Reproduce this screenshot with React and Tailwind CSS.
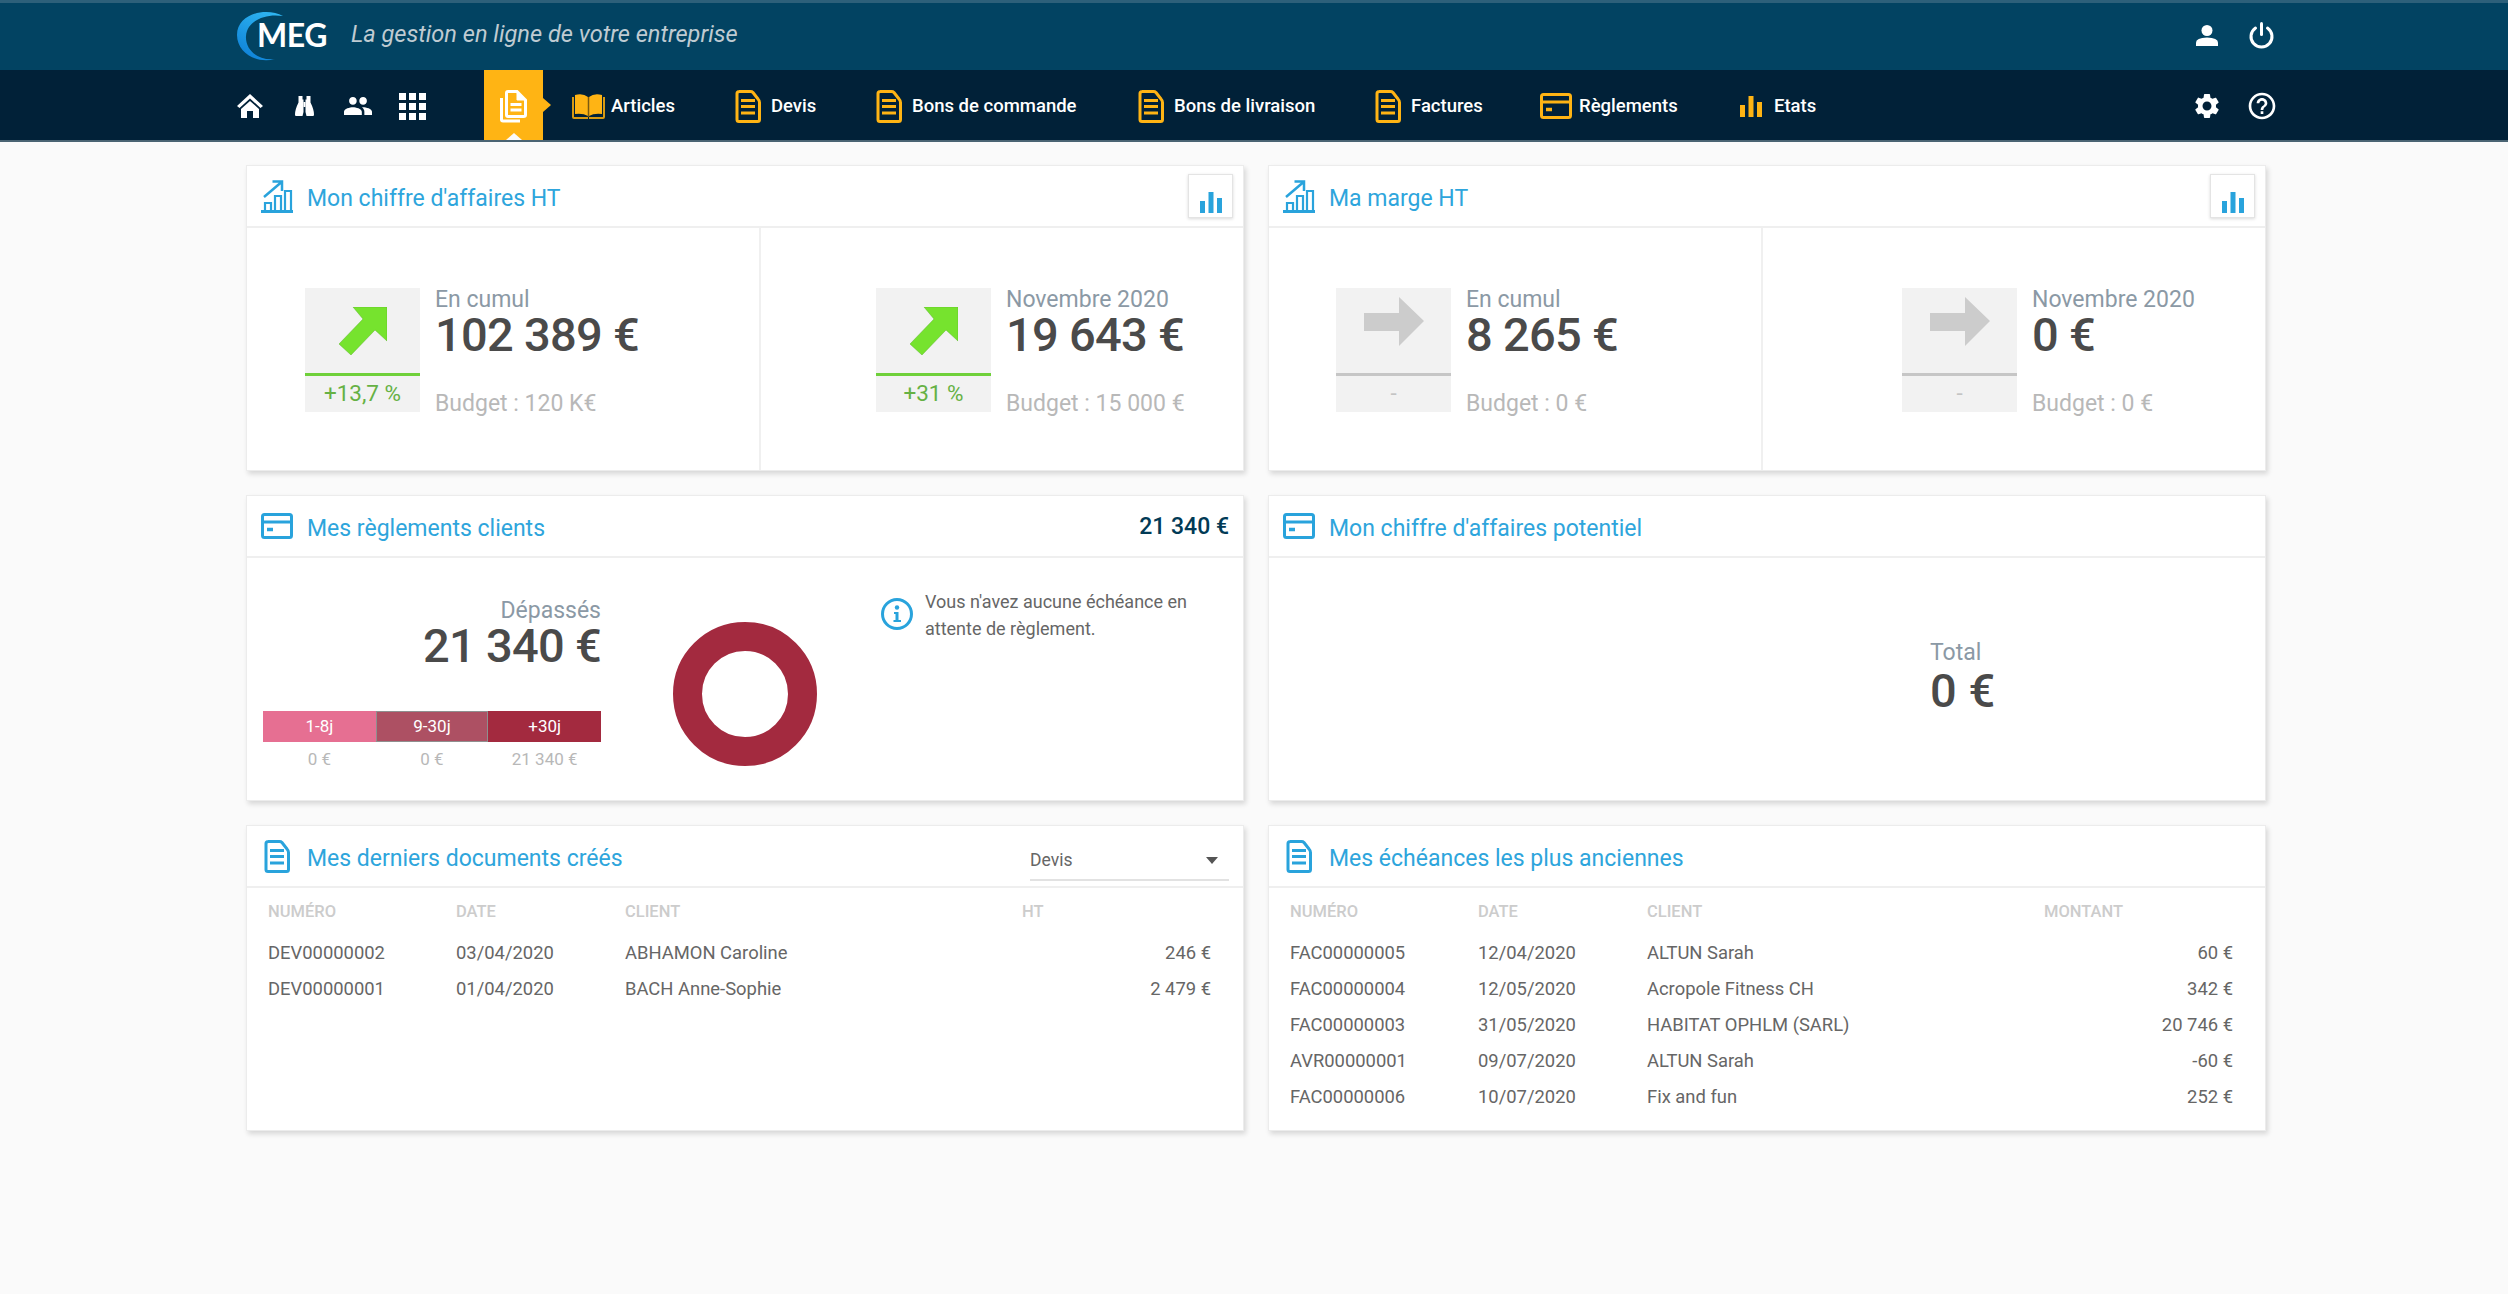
const DocIcon = ({ color }) => (
    <svg width="26" height="33" viewBox="0 0 26 33" fill="none" stroke={color} strokeWidth="3">
        <path d="M4 1.500h11.500q1.500 0 2.500 1l5 6.500q1.500 1.500 1.500 3.500v17q0 2-2 2h-18.500q-2 0-2-2v-26q0-2 2.500-2z" />
        <path d="M6 10.500h14M6 16.500h14M6 23h14" />
    </svg>
);

const BookIcon = () => (
    <svg width="33" height="25" viewBox="0 0 33 25">
        <path d="M0 3h2v20h14v2h-14q-2 0-2-2z" fill="#d89a12" />
        <path d="M33 3h-2v20h-14v2h14q2 0 2-2z" fill="#d89a12" />
        <path d="M3 1q8-2 13 2v19q-5-3-13-2z" fill="#ffb414" />
        <path d="M30 1q-8-2-13 2v19q5-3 13-2z" fill="#ffb414" />
        <path d="M16.500 3v20" stroke="#7a5a10" strokeWidth="1.500" />
    </svg>
);

const CardIcon = ({ color }) => (
    <svg width="32" height="26" viewBox="0 0 32 26" fill="none" stroke={color} strokeWidth="3">
        <rect x="1.500" y="1.500" width="29" height="23" rx="2" />
        <path d="M2 9h28" />
        <path d="M6 16.500h6" strokeWidth="3.500" />
    </svg>
);

const BarsIcon = ({ color, w, h }) => (
    <svg width={w} height={h} viewBox="0 0 22 21" fill={color}>
        <rect x="0" y="9" width="5" height="12" />
        <rect x="8.500" y="0" width="5" height="21" />
        <rect x="17" y="6" width="5" height="15" />
    </svg>
);

const GrowthIcon = () => (
    <svg width="32" height="33" viewBox="0 0 32 33" fill="none" stroke="#29a3dc" strokeWidth="2.500">
        <path d="M0 31.500h32" strokeWidth="3" />
        <path d="M4 30v-7h6v7M14 30V16h6v14M24 30V11h6v19" strokeWidth="2.200" />
        <path d="M3 17 20 2.500M11.500 1.500h9.500v9.500" />
    </svg>
);

const HomeIcon = () => (
    <svg width="26" height="24" viewBox="0 0 26 24" fill="#fff">
        <path d="M13 0 26 12l-2.500 2L13 4.500 2.500 14 0 12z" />
        <path d="M13 7l9 8v9h-6v-7h-6v7H4v-9z" />
    </svg>
);

const BinocularsIcon = () => (
    <svg width="19" height="20" viewBox="0 0 19 20" fill="#fff">
        <path d="M3.500 0h4v3.500h1V16l-1 4H1q-1 0-1-1.500 0-5 3.500-12z" />
        <path d="M15.500 0h-4v3.500h-1V16l1 4H18q1 0 1-1.500 0-5-3.500-12z" />
        <path d="M8.500 6h2v5h-2z" />
    </svg>
);

const PeopleIcon = () => (
    <svg width="28" height="28" viewBox="1 1 22 22" fill="#fff">
        <path d="M16 11c1.660 0 2.990-1.340 2.990-3S17.660 5 16 5c-1.660 0-3 1.340-3 3s1.340 3 3 3zm-8 0c1.660 0 2.990-1.340 2.990-3S9.660 5 8 5C6.340 5 5 6.340 5 8s1.340 3 3 3zm0 2c-2.330 0-7 1.170-7 3.500V19h14v-2.500c0-2.330-4.670-3.500-7-3.500zm8 0c-.290 0-.620.020-.970.050 1.160.840 1.970 1.970 1.970 3.450V19h6v-2.500c0-2.330-4.670-3.500-7-3.500z" />
    </svg>
);

const GridIcon = () => (
    <svg width="27" height="27" viewBox="0 0 27 27" fill="#fff">
        {[0, 10, 20].map((y) =>
            [0, 10, 20].map((x) => <rect key={`${x}-${y}`} x={x} y={y} width="7" height="7" />)
        )}
    </svg>
);

const DocsIcon = () => (
    <svg width="27" height="33" viewBox="0 0 27 33" fill="none" stroke="#fff" strokeWidth="3">
        <path d="M8 1.500h9l8.500 8.500v15q0 1.500-2 1.500H8q-1.500 0-1.500-1.500v-22q0-1.500 1.500-1.500z" />
        <path d="M17 1.500 25.500 10H17z" fill="#fff" strokeWidth="1" />
        <path d="M10.500 14.500h11M10.500 20h11" />
        <path d="M1.500 8v21.500q0 1.500 1.500 1.500h17" />
    </svg>
);

const UserIcon = () => (
    <svg width="22" height="21" viewBox="0 0 22 21" fill="#fff">
        <circle cx="11" cy="5.500" r="5.500" />
        <path d="M0 21v-3.500q0-4.500 11-5 11 .500 11 5V21z" />
    </svg>
);

const PowerIcon = () => (
    <svg width="27" height="27" viewBox="0 0 27 27" fill="none" stroke="#fff" strokeWidth="3" strokeLinecap="round">
        <path d="M13.500 1.500v11" />
        <path d="M7.500 6a10.500 10.500 0 1 0 12 0" />
    </svg>
);

const GearIcon = () => (
    <svg width="30" height="30" viewBox="0 0 24 24" fill="#fff">
        <path d="M19.140 12.940c.040-.300.060-.610.060-.940 0-.320-.020-.640-.070-.940l2.030-1.580c.180-.140.230-.410.120-.610l-1.920-3.320c-.120-.220-.370-.290-.590-.220l-2.390.960c-.500-.380-1.030-.700-1.620-.940l-.360-2.540c-.040-.240-.240-.410-.480-.410h-3.840c-.240 0-.430.170-.470.410l-.360 2.540c-.590.240-1.130.570-1.620.940l-2.390-.960c-.220-.080-.470 0-.590.220L2.740 8.870c-.120.210-.080.470.120.610l2.030 1.580c-.050.300-.090.630-.090.940s.020.640.070.940l-2.030 1.580c-.180.140-.230.410-.120.610l1.920 3.320c.120.220.370.290.590.220l2.390-.960c.500.380 1.030.700 1.620.940l.360 2.540c.050.240.240.410.480.410h3.840c.240 0 .440-.170.470-.410l.360-2.540c.590-.240 1.130-.560 1.620-.940l2.390.960c.220.080.470 0 .590-.220l1.920-3.320c.120-.220.070-.470-.120-.610l-2.010-1.580zM12 15.600c-1.980 0-3.600-1.620-3.600-3.600s1.620-3.600 3.600-3.600 3.600 1.620 3.600 3.600-1.620 3.600-3.600 3.600z" />
    </svg>
);

const HelpIcon = () => (
    <svg width="32" height="32" viewBox="0 0 24 24" fill="#fff">
        <path d="M11 18h2v-2h-2v2zm1-16C6.480 2 2 6.480 2 12s4.480 10 10 10 10-4.480 10-10S17.520 2 12 2zm0 18c-4.410 0-8-3.590-8-8s3.590-8 8-8 8 3.590 8 8-3.590 8-8 8zm0-14c-2.210 0-4 1.790-4 4h2c0-1.100.900-2 2-2s2 .900 2 2c0 2-3 1.750-3 5h2c0-2.250 3-2.500 3-5 0-2.210-1.790-4-4-4z" />
    </svg>
);

const InfoIcon = () => (
    <svg width="32" height="32" viewBox="0 0 32 32" fill="none">
        <circle cx="16" cy="16" r="14.500" stroke="#29a3dc" strokeWidth="3" />
        <circle cx="16" cy="9.500" r="2.200" fill="#29a3dc" />
        <path d="M13 14h4.500v8H20v2h-7.500v-2h2v-6H13z" fill="#29a3dc" />
    </svg>
);

const navItems = [
    { label: "Articles", width: "w-[160px]", icon: <BookIcon /> },
    { label: "Devis", width: "w-[141px]", icon: <DocIcon color="#ffb414" /> },
    { label: "Bons de commande", width: "w-[262px]", icon: <DocIcon color="#ffb414" /> },
    { label: "Bons de livraison", width: "w-[237px]", icon: <DocIcon color="#ffb414" /> },
    { label: "Factures", width: "w-[168px]", icon: <DocIcon color="#ffb414" /> },
    { label: "Règlements", width: "w-[195px]", icon: <CardIcon color="#ffb414" /> },
    { label: "Etats", width: "w-auto", icon: <BarsIcon color="#ffb414" w={22} h={21} /> },
];

const TopBar = () => (
    <header className="h-[70px] bg-[#024362] border-t-[3px] border-[#2d607a] flex items-center pb-[3px] pl-[237px] pr-[219px] text-white">
        <svg width="46" height="52" viewBox="0 0 46 52" className="shrink-0">
            <defs>
                <linearGradient id="crescent" x1="0.800" y1="0" x2="0.300" y2="1">
                    <stop offset="0" stopColor="#2fb6f2" />
                    <stop offset="1" stopColor="#0f82d8" />
                </linearGradient>
            </defs>
            <path d="M46 7C30-2 0 4 0 26c0 18 20 29 38 24C20 52 8 40 9 27 10 12 28 4 46 7z" fill="url(#crescent)" />
        </svg>
        <span className="[font-family:Lato,sans-serif] font-bold text-[32px] leading-none -ml-[26px] tracking-[-0.5px]">MEG</span>
        <span className="ml-[24px] -mt-[1px] italic text-[23.6px] text-[#bfcbd2] leading-none">La gestion en ligne de votre entreprise</span>
        <div className="ml-auto flex items-center">
            <span className="w-[55px] flex justify-center"><UserIcon /></span>
            <span className="w-[55px] flex justify-center"><PowerIcon /></span>
        </div>
    </header>
);

const NavBar = () => (
    <nav className="h-[72px] bg-[#012138] border-b-[2px] border-[#4a6473] flex pl-[223px] pr-[219px] text-white">
        <div className="flex items-center pt-[2px]">
            <span className="w-[54px] flex justify-center"><HomeIcon /></span>
            <span className="w-[54px] flex justify-center"><BinocularsIcon /></span>
            <span className="w-[54px] flex justify-center"><PeopleIcon /></span>
            <span className="w-[54px] flex justify-center"><GridIcon /></span>
        </div>
        <div className="relative ml-[45px] w-[59px] bg-[#ffb414] flex items-center justify-center pt-[2px]">
            <DocsIcon />
            <span className="absolute top-1/2 -translate-y-1/2 -right-[8px] border-y-[7px] border-y-transparent border-l-[8px] border-l-[#ffb414]" />
            <span className="absolute bottom-0 left-1/2 -translate-x-1/2 border-x-[8px] border-x-transparent border-b-[7px] border-b-[#fafafa]" />
        </div>
        <div className="ml-[22px] flex items-center pt-[2px]">
            {navItems.map((item) => (
                <div key={item.label} className={`flex items-center ${item.width}`}>
                    <span className="w-[46px] flex justify-center">{item.icon}</span>
                    <span className="mt-[1px] text-[18.5px] font-medium">{item.label}</span>
                </div>
            ))}
        </div>
        <div className="ml-auto flex items-center pt-[2px]">
            <span className="w-[55px] flex justify-center"><GearIcon /></span>
            <span className="w-[55px] flex justify-center"><HelpIcon /></span>
        </div>
    </nav>
);

const Card = ({ icon, title, right, children }) => (
    <section className="h-[306px] bg-white border border-[#ececec] shadow-[2px_3px_5px_rgba(0,0,0,0.14)] flex flex-col">
        <div className="h-[62px] shrink-0 border-b-[2px] border-[#efefef] flex items-center pr-[10px] relative">
            <span className="w-[60px] flex justify-center">{icon}</span>
            <h2 className="pt-[6px] text-[23px] font-normal text-[#2ea5dc]">{title}</h2>
            <div className="ml-auto">{right}</div>
        </div>
        {children}
    </section>
);

const ChartButton = () => (
    <button className="w-[45px] h-[44px] border border-[#e4e4e4] shadow-[0_1px_3px_rgba(0,0,0,0.15)] flex items-end justify-center pb-[4px]">
        <BarsIcon color="#29a3dc" w={22} h={21} />
    </button>
);

const upArrow = (
    <svg width="48" height="48" viewBox="0 0 48 48">
        <path d="M48 0H14l10 12L0 37l12 11 24-25 12 11z" fill="#76e32e" stroke="#5cb82a" strokeWidth="0.500" />
    </svg>
);

const flatArrow = (
    <svg width="60" height="49" viewBox="0 0 60 49" className="-mt-[19px]">
        <path d="M0 16h35V0l25 24-25 25V34H0z" fill="#cccccc" />
    </svg>
);

const Stat = ({ padding, border, up, pct, label, value, budget }) => (
    <div className={`flex items-start pt-[60px] ${padding} ${border}`}>
        <div className="w-[115px] h-[124px] bg-[#f2f2f2] flex flex-col shrink-0">
            <div className={`h-[88px] flex items-center justify-center border-b-[3px] ${up ? "border-[#6fd03a]" : "border-[#c6c6c6]"}`}>
                {up ? upArrow : flatArrow}
            </div>
            <div className={`flex-1 flex items-center justify-center text-[22.5px] ${up ? "text-[#66b144]" : "text-[#c4c4c4]"}`}>{pct}</div>
        </div>
        <div className="ml-[15px]">
            <div className="text-[23px] leading-[24px] text-[#8b99a5]">{label}</div>
            <div className="text-[47px] tracking-[-0.7px] leading-[46px] font-medium text-[#4a4a4a] whitespace-nowrap">{value}</div>
            <div className="mt-[34px] text-[23px] leading-[24px] text-[#b8b8b8]">{budget}</div>
        </div>
    </div>
);

const buckets = [
    { label: "1-8j", amount: "0 €", cls: "bg-[#e66f92]" },
    { label: "9-30j", amount: "0 €", cls: "bg-[#ad5063] border border-[#8f8f8f]" },
    { label: "+30j", amount: "21 340 €", cls: "bg-[#a32a3f]" },
];

const Reglements = () => (
    <Card
        icon={<CardIcon color="#29a3dc" />}
        title="Mes règlements clients"
        right={<span className="inline-block pt-[3px] pr-[4px] text-[23px] font-medium text-[#013a56]">21 340 €</span>}
    >
        <div className="flex">
            <div className="ml-[16px] w-[338px] pt-[41px] text-right">
                <div className="text-[23px] leading-[24px] text-[#8b99a5]">Dépassés</div>
                <div className="text-[47px] tracking-[-0.7px] leading-[46px] font-medium text-[#4a4a4a]">21 340 €</div>
                <div className="mt-[42px] grid grid-cols-3 text-center">
                    {buckets.map((b) => (
                        <div key={b.label} className={`h-[31px] flex items-center justify-center text-[17px] text-white ${b.cls}`}>{b.label}</div>
                    ))}
                    {buckets.map((b) => (
                        <div key={b.label} className="mt-[7px] text-[17px] leading-[20px] text-[#b8b8b8]">{b.amount}</div>
                    ))}
                </div>
            </div>
            <div className="ml-[72px] pt-[64px]">
                <svg width="144" height="144" viewBox="0 0 144 144" fill="none">
                    <circle cx="72" cy="72" r="57.500" stroke="#a32a3f" strokeWidth="29" />
                </svg>
            </div>
            <div className="ml-[64px] pt-[30px] flex items-start gap-[12px]">
                <span className="mt-[10px]"><InfoIcon /></span>
                <p className="w-[300px] text-[18px] leading-[27px] text-[#666666]">
                    Vous n'avez aucune échéance en attente de règlement.
                </p>
            </div>
        </div>
    </Card>
);

const Table = ({ head, rows, padding }) => (
    <div className={`pt-[6px] ${padding}`}>
        <div className="grid grid-cols-[188px_169px_397px_1fr] h-[36px] items-center text-[16.5px] font-medium uppercase text-[#cccccc]">
            {head.map((h) => <div key={h}>{h}</div>)}
        </div>
        <div className="mt-[5px]">
            {rows.map((row) => (
                <div key={row[0]} className="grid grid-cols-[188px_169px_397px_1fr] h-[36px] items-center text-[18.4px] text-[#666666]">
                    <div>{row[0]}</div>
                    <div>{row[1]}</div>
                    <div>{row[2]}</div>
                    <div className="text-right">{row[3]}</div>
                </div>
            ))}
        </div>
    </div>
);

const docs = [
    ["DEV00000002", "03/04/2020", "ABHAMON Caroline", "246 €"],
    ["DEV00000001", "01/04/2020", "BACH Anne-Sophie", "2 479 €"],
];

const dues = [
    ["FAC00000005", "12/04/2020", "ALTUN Sarah", "60 €"],
    ["FAC00000004", "12/05/2020", "Acropole Fitness CH", "342 €"],
    ["FAC00000003", "31/05/2020", "HABITAT OPHLM (SARL)", "20 746 €"],
    ["AVR00000001", "09/07/2020", "ALTUN Sarah", "-60 €"],
    ["FAC00000006", "10/07/2020", "Fix and fun", "252 €"],
];

const DevisSelect = () => (
    <div className="mr-[4px] mt-[10px] w-[199px] h-[40px] border-b-[2px] border-[#e2e2e2] flex items-center justify-between pr-[11px] text-[17.5px] text-[#666666]">
        Devis
        <span className="border-x-[6px] border-x-transparent border-t-[7px] border-t-[#555555]" />
    </div>
);

export default function App() {
    return (
        <div className="min-h-screen bg-[#fafafa] [font-family:Roboto,sans-serif]">
            <TopBar />
            <NavBar />
            <main className="pl-[246px] pr-[242px] pt-[23px] grid grid-cols-2 gap-x-[24px] gap-y-[24px]">
                <Card icon={<GrowthIcon />} title="Mon chiffre d'affaires HT" right={<ChartButton />}>
                    <div className="flex-1 grid grid-cols-[514px_1fr]">
                        <Stat padding="pl-[58px]" border="border-r-[2px] border-[#f0f0f0]" up pct="+13,7 %" label="En cumul" value="102 389 €" budget="Budget : 120 K€" />
                        <Stat padding="pl-[115px]" up pct="+31 %" label="Novembre 2020" value="19 643 €" budget="Budget : 15 000 €" />
                    </div>
                </Card>
                <Card icon={<GrowthIcon />} title="Ma marge HT" right={<ChartButton />}>
                    <div className="flex-1 grid grid-cols-[494px_1fr]">
                        <Stat padding="pl-[67px]" border="border-r-[2px] border-[#f0f0f0]" pct="-" label="En cumul" value="8 265 €" budget="Budget : 0 €" />
                        <Stat padding="pl-[139px]" pct="-" label="Novembre 2020" value="0 €" budget="Budget : 0 €" />
                    </div>
                </Card>
                <Reglements />
                <Card icon={<CardIcon color="#29a3dc" />} title="Mon chiffre d'affaires potentiel">
                    <div className="pl-[661px] pt-[83px]">
                        <div className="text-[23px] leading-[24px] text-[#8b99a5]">Total</div>
                        <div className="text-[47px] leading-[52px] font-medium text-[#4a4a4a]">0 €</div>
                    </div>
                </Card>
                <Card icon={<DocIcon color="#29a3dc" />} title="Mes derniers documents créés" right={<DevisSelect />}>
                    <Table padding="pl-[21px] pr-[32px]" head={["Numéro", "Date", "Client", "HT"]} rows={docs} />
                </Card>
                <Card icon={<DocIcon color="#29a3dc" />} title="Mes échéances les plus anciennes">
                    <Table padding="pl-[21px] pr-[32px]" head={["Numéro", "Date", "Client", "Montant"]} rows={dues} />
                </Card>
            </main>
        </div>
    );
}
